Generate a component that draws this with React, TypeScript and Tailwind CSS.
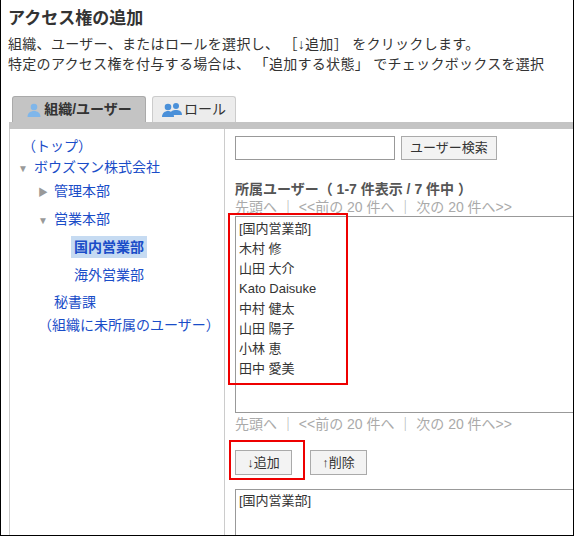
const F = { fontFamily: '"Liberation Sans", "Noto Sans CJK JP", sans-serif' };

function UserIcon({ two }: { two?: boolean }) {
  return (
    <svg width={two ? 20 : 16} height="16" viewBox={two ? '0 0 20 16' : '0 0 16 16'} className="mr-0.5">
      {two && (
        <g fill="#4a90d9">
          <circle cx="14" cy="4" r="3" />
          <path d="M8 13c0-4 3-5 6-5s6 1 6 5z" />
        </g>
      )}
      <g fill={two ? '#4a90d9' : '#7fb6ea'}>
        <circle cx={two ? 6 : 8} cy="5" r="3.3" />
        <path d={two ? 'M0 15c0-4 3-6 6-6s6 2 6 6z' : 'M1.5 15c0-4 3-6 6.5-6s6.5 2 6.5 6z'} />
      </g>
    </svg>
  );
}

const Tri = ({ down }: { down?: boolean }) => (
  <span className="inline-block w-4 text-[10px] text-[#999]">{down ? '▼' : '▶'}</span>
);

export default function App() {
  const users = ['[国内営業部]', '木村 修', '山田 大介', 'Kato Daisuke', '中村 健太', '山田 陽子', '小林 恵', '田中 愛美'];
  return (
    <div style={F} className="relative w-[574px] h-[536px] overflow-hidden bg-white border-x border-b border-black text-[#333]">
      <div className="px-[7px] pt-[8px]">
        <h1 className="text-[17px] font-bold leading-[22px]">アクセス権の追加</h1>
        <p className="text-[14px] leading-[20px] mt-[4px] whitespace-nowrap tracking-[0.3px]">組織、ユーザー、またはロールを選択し、 ［↓追加］ をクリックします。</p>
        <p className="text-[14px] leading-[20px] whitespace-nowrap tracking-[0.3px]">特定のアクセス権を付与する場合は、 「追加する状態」 でチェックボックスを選択</p>
      </div>
      <div className="ml-[8px] mt-[22px]">
        <div className="flex items-end gap-[6px] pl-[3px] h-[26px]">
          <div className="h-[26px] w-[134px] flex items-center justify-center bg-[#c4c4c4] border border-b-0 border-[#aaa] rounded-t-[3px] text-[14px] font-bold">
            <UserIcon />組織/ユーザー
          </div>
          <div className="h-[26px] w-[84px] flex items-center justify-center bg-[#ececec] border border-b-0 border-[#ccc] rounded-t-[3px] text-[14px]">
            <UserIcon two />ロール
          </div>
        </div>
        <div className="h-[7px] bg-[#c4c4c4]" />
        <div className="flex h-[420px]">
          <div className="w-[216px] border-x border-[#ccc] pt-[7px] text-[14px] text-[#1a4dc8] leading-[21px]">
            <div className="pl-[12px]">（トップ）</div>
            <div className="pl-[8px]"><Tri down />ボウズマン株式会社</div>
            <div className="pl-[28px] mt-[2px]"><Tri />管理本部</div>
            <div className="pl-[28px] mt-[6px]"><Tri down />営業本部</div>
            <div className="pl-[61px] mt-[6px]"><span className="bg-[#c6dbf2] font-bold px-[3px] py-[3px]">国内営業部</span></div>
            <div className="pl-[64px] mt-[7px]">海外営業部</div>
            <div className="pl-[44px] mt-[6px]">秘書課</div>
            <div className="pl-[28px] mt-[2px]">（組織に未所属のユーザー）</div>
          </div>
          <div className="flex-1 pl-[10px] pt-[7px] text-[14px]">
            <div className="flex items-center gap-[6px]">
              <div className="w-[160px] h-[24px] border border-[#999] bg-white" />
              <button className="h-[24px] px-[8px] border border-[#aaa] bg-[#f3f3f3] text-[13px]">ユーザー検索</button>
            </div>
            <div className="mt-[20px] font-bold text-[#555] leading-[18px]">所属ユーザー（ 1-7 件表示 / 7 件中 ）</div>
            <div className="text-[#aaa] leading-[18px] whitespace-nowrap">先頭へ ｜ &lt;&lt;前の 20 件へ ｜ 次の 20 件へ&gt;&gt;</div>
            <div className="h-[197px] border border-[#999] border-r-0 pl-[3px] pt-[2px] leading-[20px] text-[13px]">
              {users.map(u => <div key={u}>{u}</div>)}
            </div>
            <div className="text-[#aaa] leading-[18px] mt-[2px] whitespace-nowrap">先頭へ ｜ &lt;&lt;前の 20 件へ ｜ 次の 20 件へ&gt;&gt;</div>
            <div className="flex gap-[18px] mt-[17px]">
              <button className="h-[25px] w-[57px] border border-[#aaa] bg-[#f3f3f3] text-[13px]">↓追加</button>
              <button className="h-[25px] w-[57px] border border-[#aaa] bg-[#f3f3f3] text-[13px]">↑削除</button>
            </div>
            <div className="mt-[14px] h-[60px] border border-[#999] border-r-0 pl-[3px] pt-[1px] text-[13px]">[国内営業部]</div>
          </div>
        </div>
      </div>
      <div className="absolute left-[227px] top-[213px] w-[120px] h-[172px] border-2 border-[#e00]" />
      <div className="absolute left-[228px] top-[440px] w-[76px] h-[40px] border-2 border-[#e00]" />
    </div>
  );
}
